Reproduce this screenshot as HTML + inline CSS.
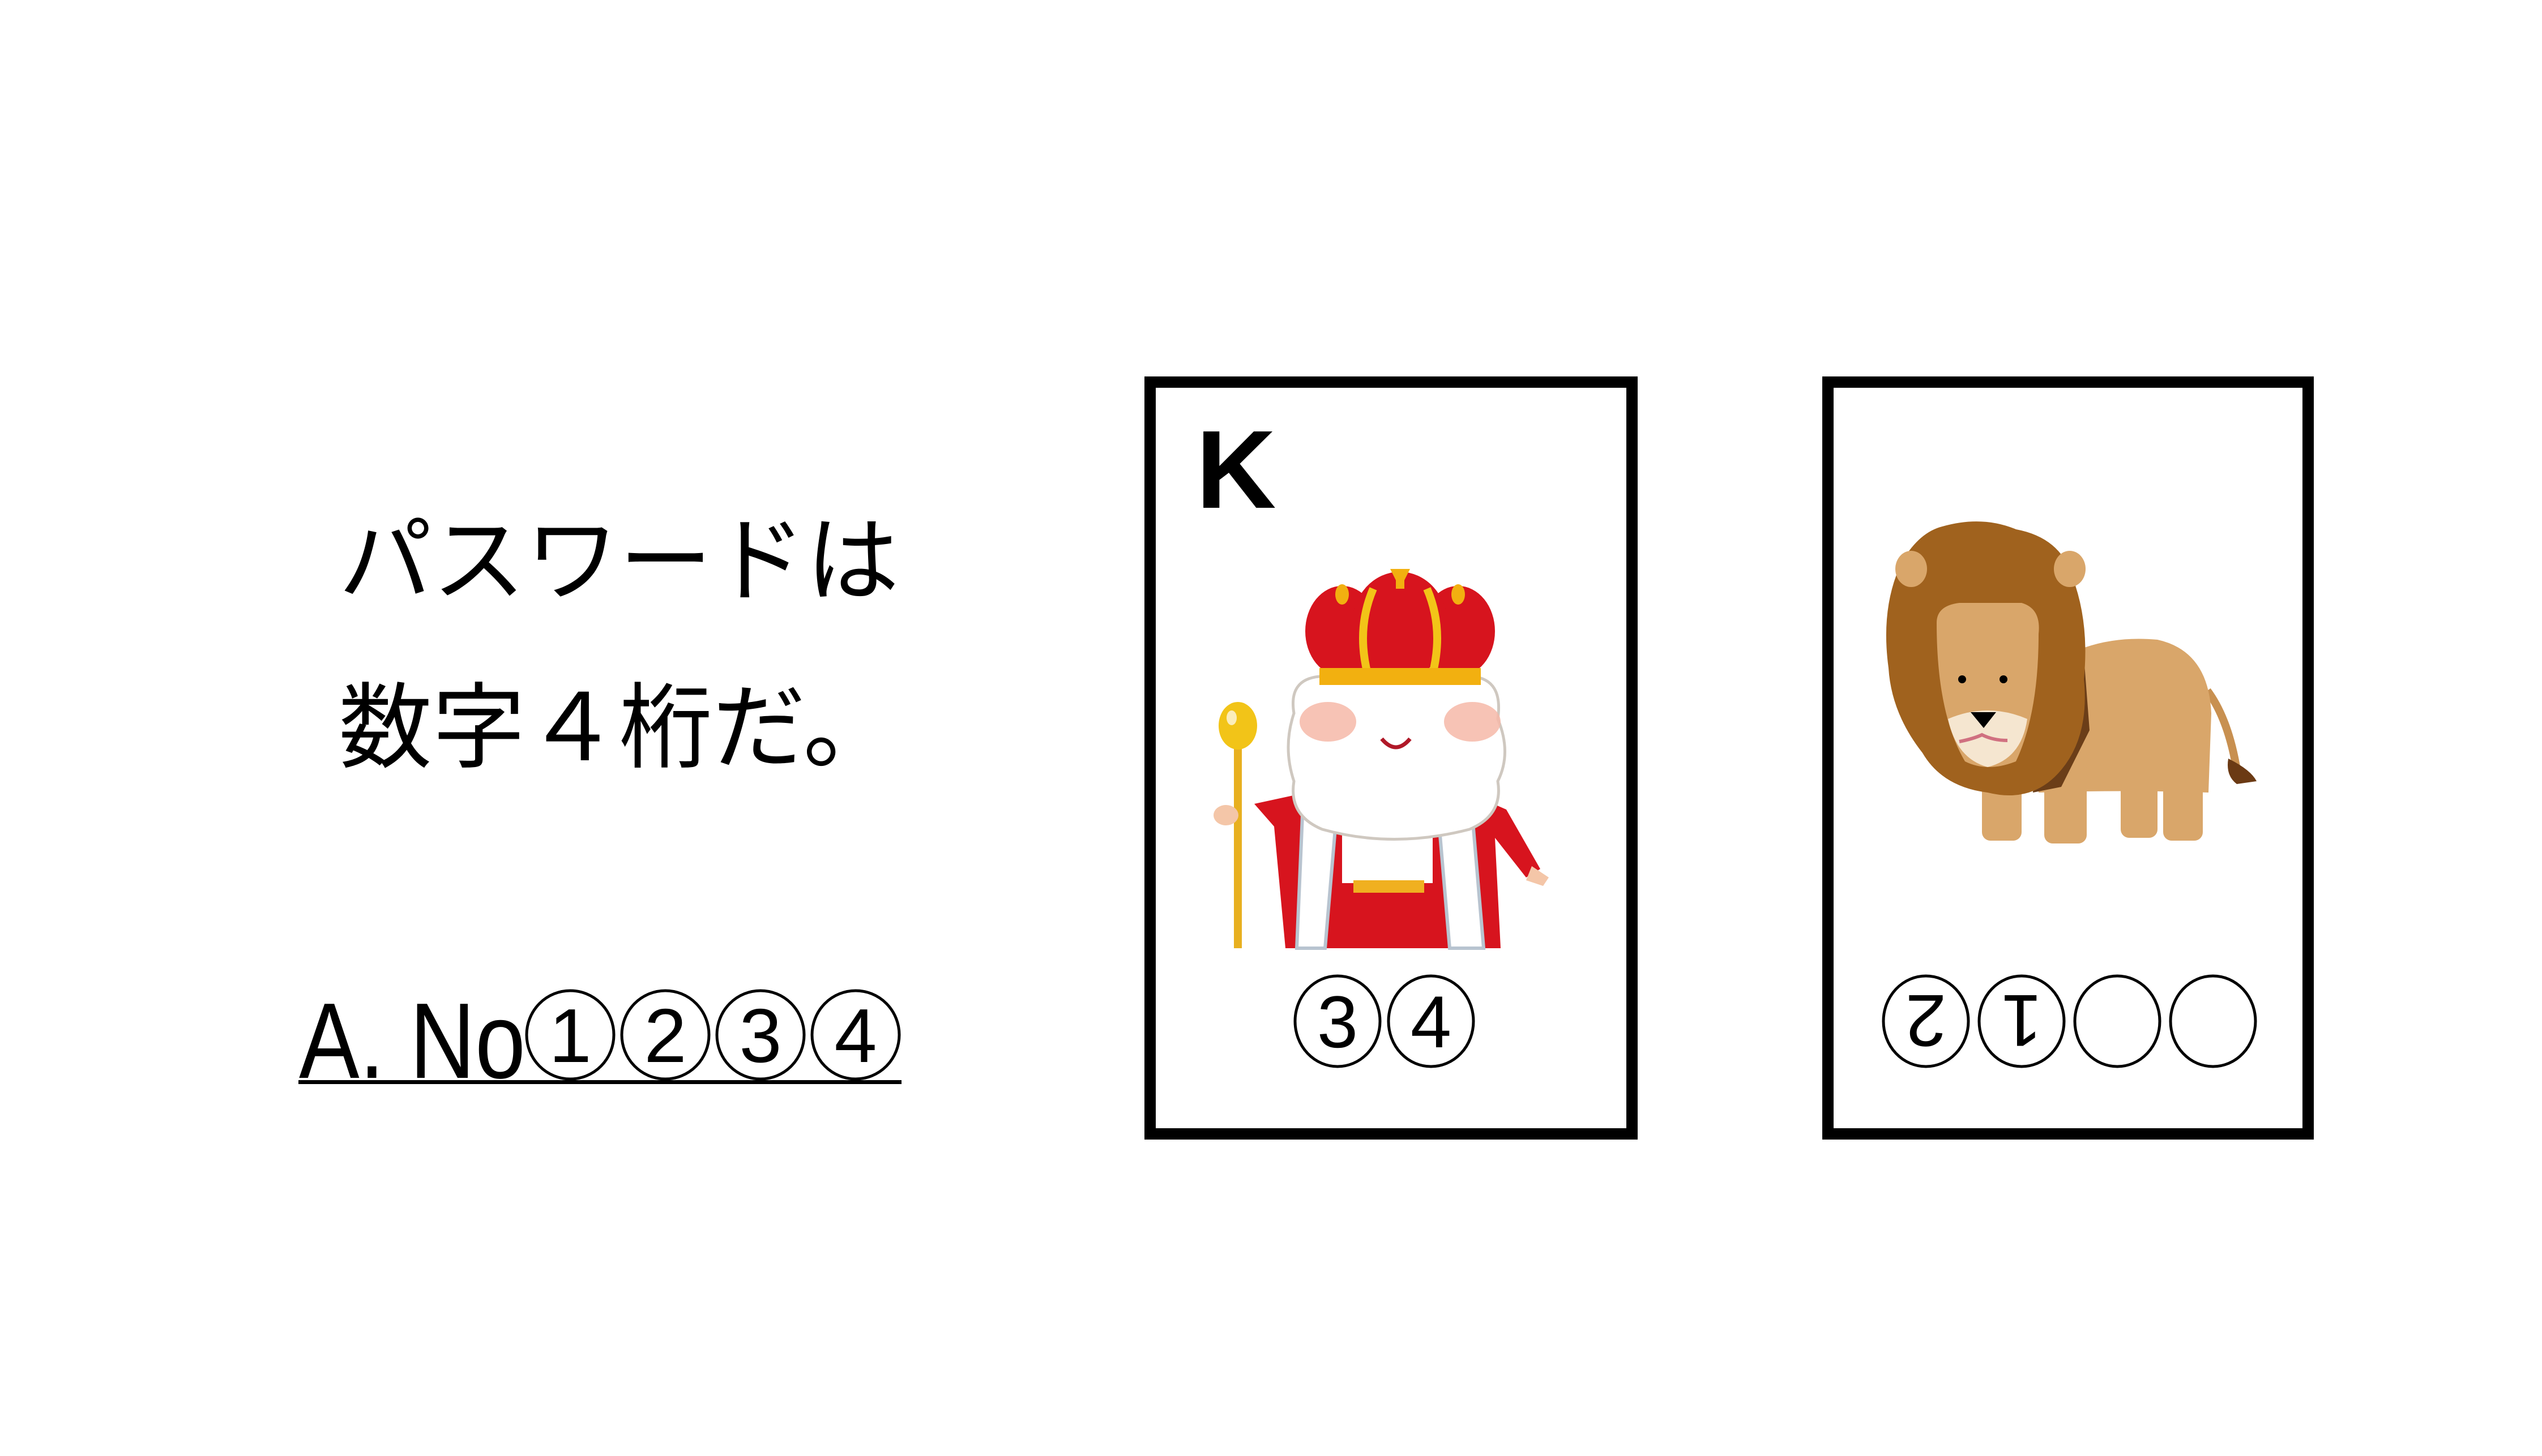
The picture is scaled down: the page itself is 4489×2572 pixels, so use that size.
<!DOCTYPE html>
<html><head><meta charset="utf-8"><style>
html,body{margin:0;padding:0;background:#fff;}
svg{display:block;}
text{font-family:"Liberation Sans","Noto Sans CJK JP",sans-serif;}
</style></head><body>
<svg width="4489" height="2572" viewBox="0 0 4489 2572" xmlns="http://www.w3.org/2000/svg">
<rect width="4489" height="2572" fill="#fff"/>
<text x="598" y="1048" font-size="165" font-family="Noto Sans CJK JP, sans-serif" font-weight="400" textLength="990" lengthAdjust="spacingAndGlyphs">パスワードは</text>
<text x="598" y="1343" font-size="165" font-family="Noto Sans CJK JP, sans-serif" font-weight="400">数字４桁だ。</text>
<text x="528" y="1904" font-size="190" font-family="Liberation Sans, sans-serif" textLength="400" lengthAdjust="spacingAndGlyphs">A. No</text>
<g fill="none" stroke="#000" stroke-width="5">
<ellipse cx="1007" cy="1828" rx="77" ry="78"/><ellipse cx="1175" cy="1828" rx="77" ry="78"/>
<ellipse cx="1343" cy="1828" rx="77" ry="78"/><ellipse cx="1511" cy="1828" rx="77" ry="78"/>
</g>
<g font-size="135" text-anchor="middle" font-family="Liberation Sans, sans-serif">
<text x="1007" y="1876">1</text><text x="1175" y="1876">2</text><text x="1343" y="1876">3</text><text x="1511" y="1876">4</text>
</g>
<rect x="527" y="1908" width="1065" height="7" fill="#000"/>

<rect x="2031" y="675" width="851" height="1328" fill="none" stroke="#000" stroke-width="20"/>
<rect x="3228" y="675" width="848" height="1328" fill="none" stroke="#000" stroke-width="20"/>
<text x="2112" y="897" font-size="196" font-weight="bold" font-family="Liberation Sans, sans-serif">K</text>

<g fill="none" stroke="#000" stroke-width="5">
<ellipse cx="2362" cy="1804" rx="75" ry="80"/><ellipse cx="2527" cy="1804" rx="75" ry="80"/>
<ellipse cx="3401" cy="1804" rx="75" ry="80"/><ellipse cx="3570" cy="1804" rx="75" ry="80"/>
<ellipse cx="3739" cy="1804" rx="75" ry="80"/><ellipse cx="3908" cy="1804" rx="75" ry="80"/>
</g>
<g font-size="130" text-anchor="middle" font-family="Liberation Sans, sans-serif">
<text x="2362" y="1850">3</text><text x="2527" y="1850">4</text>
<text x="3401" y="1850" transform="rotate(180 3401 1804)">2</text>
<text x="3570" y="1850" transform="rotate(180 3570 1804)">1</text>
</g>

<g>
<rect x="2179" y="1275" width="14" height="400" fill="#e8b020"/>
<ellipse cx="2186" cy="1282" rx="34" ry="42" fill="#f2c418"/>
<ellipse cx="2175" cy="1268" rx="9" ry="13" fill="#fff" opacity=".7"/>
<path d="M2215 1420 L2330 1395 L2300 1675 L2270 1675 L2250 1460 Z" fill="#d7141e"/>
<path d="M2580 1395 L2660 1430 L2720 1535 L2695 1550 L2640 1480 L2650 1675 L2590 1675 Z" fill="#d7141e"/>
<path d="M2290 1420 L2600 1420 L2640 1675 L2270 1675 Z" fill="#d7141e"/>
<path d="M2300 1440 L2360 1440 L2340 1675 L2290 1675 Z M2540 1440 L2600 1440 L2620 1675 L2560 1675 Z" fill="#fff" stroke="#b8c4d0" stroke-width="6"/>
<rect x="2370" y="1440" width="160" height="120" fill="#fff"/>
<rect x="2390" y="1555" width="125" height="22" fill="#f0b020"/>
<path d="M2705 1530 l30 20 l-10 15 l-30 -10 z" fill="#f4c6a8"/>
<ellipse cx="2165" cy="1440" rx="22" ry="18" fill="#f4c6a8"/>
<path d="M2285 1260 Q2275 1200 2330 1195 L2600 1195 Q2655 1200 2645 1270 Q2670 1330 2645 1380 Q2655 1440 2595 1465 Q2460 1500 2335 1465 Q2275 1440 2285 1380 Q2265 1320 2285 1260 Z" fill="#fff" stroke="#cfc8c0" stroke-width="5"/>
<ellipse cx="2345" cy="1275" rx="50" ry="35" fill="#f6b8a8" opacity=".85"/>
<ellipse cx="2600" cy="1275" rx="50" ry="35" fill="#f6b8a8" opacity=".85"/>
<path d="M2440 1305 q25 30 50 0" fill="none" stroke="#b01828" stroke-width="7"/>
<ellipse cx="2370" cy="1115" rx="65" ry="80" fill="#d7141e"/>
<ellipse cx="2575" cy="1115" rx="65" ry="80" fill="#d7141e"/>
<ellipse cx="2472" cy="1105" rx="85" ry="95" fill="#d7141e"/>
<path d="M2425 1040 Q2395 1110 2415 1190 M2520 1040 Q2550 1110 2530 1190" fill="none" stroke="#f2c418" stroke-width="14"/>
<rect x="2330" y="1180" width="285" height="30" fill="#f2b010"/>
<ellipse cx="2370" cy="1050" rx="12" ry="18" fill="#f2b010"/><ellipse cx="2575" cy="1050" rx="12" ry="18" fill="#f2b010"/>
<path d="M2455 1005 h35 l-10 20 v15 h-15 v-15 z" fill="#f2b010"/>
</g>

<g>
<path d="M3898 1220 Q3935 1270 3950 1360" fill="none" stroke="#c89050" stroke-width="14"/>
<path d="M3935 1340 Q3975 1360 3985 1380 L3950 1385 Q3930 1370 3935 1340 Z" fill="#6b3a14"/>
<rect x="3500" y="1350" width="70" height="135" rx="15" fill="#d9a66a"/>
<rect x="3610" y="1330" width="75" height="160" rx="15" fill="#d9a66a"/>
<rect x="3745" y="1360" width="65" height="120" rx="15" fill="#d9a66a"/>
<rect x="3820" y="1340" width="70" height="145" rx="15" fill="#d9a66a"/>
<path d="M3620 1175 Q3700 1120 3810 1130 Q3900 1150 3905 1260 L3900 1400 Q3750 1395 3600 1400 Z" fill="#d9a66a"/>
<path d="M3610 1115 L3680 1160 L3690 1290 L3640 1390 L3590 1400 Z" fill="#6b3e18"/>
<path d="M3430 930 Q3500 910 3560 935 Q3640 950 3660 1020 Q3690 1100 3680 1200 Q3690 1300 3640 1360 Q3590 1420 3510 1400 Q3430 1390 3395 1330 Q3340 1260 3335 1180 Q3320 1070 3360 990 Q3390 940 3430 930 Z" fill="#a0621e"/>
<ellipse cx="3375" cy="1005" rx="28" ry="32" fill="#d9a66a"/>
<ellipse cx="3655" cy="1005" rx="28" ry="32" fill="#d9a66a"/>
<path d="M3420 1100 Q3420 1070 3460 1065 L3570 1065 Q3605 1075 3600 1120 Q3600 1260 3560 1345 Q3510 1365 3470 1345 Q3420 1260 3420 1100 Z" fill="#d9a66a"/>
<path d="M3440 1270 Q3510 1240 3580 1270 Q3570 1340 3510 1355 Q3455 1340 3440 1270 Z" fill="#f5e6d0"/>
<circle cx="3465" cy="1200" r="7" fill="#000"/><circle cx="3538" cy="1200" r="7" fill="#000"/>
<path d="M3480 1258 h45 l-22 28 z" fill="#000"/>
<path d="M3460 1310 q25 -5 40 -12 q20 10 45 10" fill="none" stroke="#d07080" stroke-width="6"/>
</g>
</svg>
</body></html>
